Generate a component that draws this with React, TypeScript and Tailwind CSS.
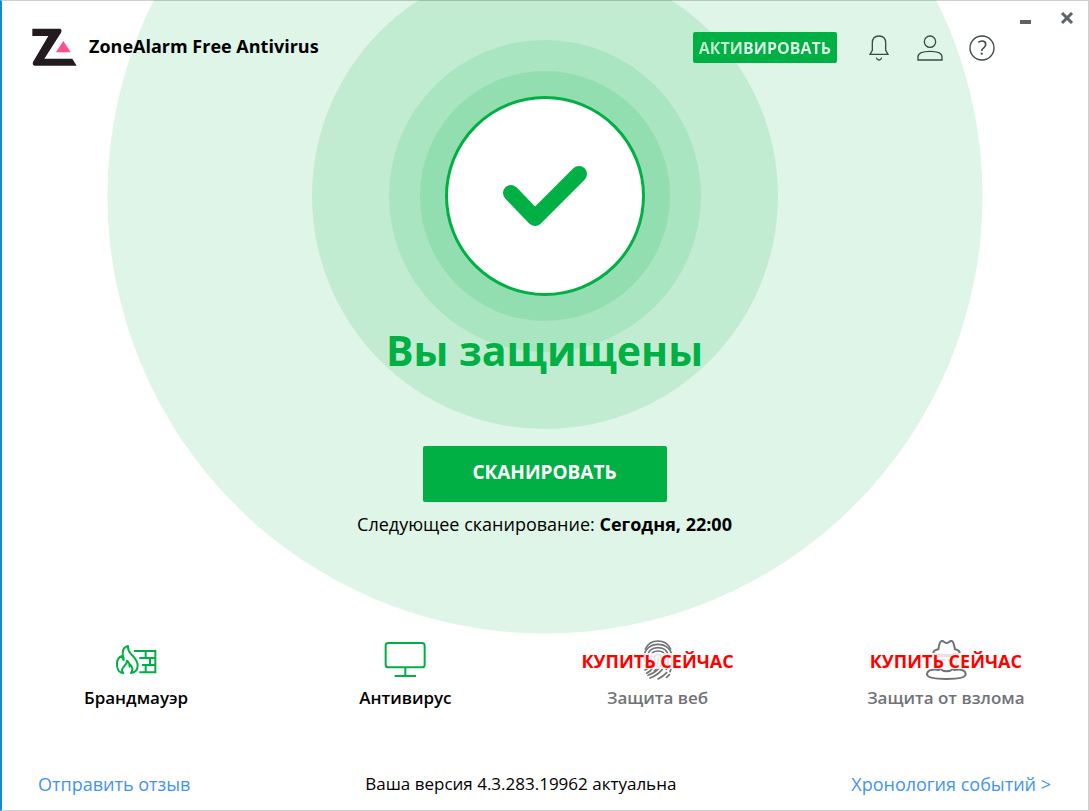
import type { ReactNode } from "react";

function Logo() {
  return (
    <svg viewBox="0 0 135 114" className="h-[38px] w-[45px]" aria-hidden="true">
      <path
        d="M1 2H84Q91 4 87 14L37 92H121L134 113H8Q0 111 3 102L49 24H1Z"
        fill="#231a20"
      />
      <path d="M94 39L116 73H72Z" fill="#ff4d8d" />
    </svg>
  );
}

function BellIcon() {
  return (
    <svg
      viewBox="0 0 60 78"
      className="h-[26px] w-5"
      fill="none"
      stroke="#3c4a48"
      strokeWidth="4"
      aria-hidden="true"
    >
      <path d="M10 46V24C10 10 18 3 30 3S50 10 50 24V46L57 58H3L10 46Z" />
      <path d="M22 68Q24 75 30 75T38 68" />
    </svg>
  );
}

function UserIcon() {
  return (
    <svg
      viewBox="0 0 78 78"
      className="size-[26px]"
      fill="none"
      stroke="#3c4a48"
      strokeWidth="4"
      aria-hidden="true"
    >
      <circle cx="39" cy="20" r="17" />
      <path d="M3 75V66C3 54 20 49 39 49S75 54 75 66V75Z" />
    </svg>
  );
}

function HelpIcon() {
  return (
    <svg
      viewBox="0 0 78 78"
      className="size-[26px]"
      fill="none"
      stroke="#3c4a48"
      strokeWidth="4"
      aria-hidden="true"
    >
      <circle cx="39" cy="39" r="36" />
      <path d="M28 22Q33 18 39 18Q50 18 50 28Q50 34 45 38Q38 43 38 48" strokeWidth="5" />
      <path d="M38 53V59" strokeWidth="6" />
    </svg>
  );
}

function FirewallIcon() {
  return (
    <svg
      viewBox="0 0 132 120"
      className="h-10 w-11"
      fill="none"
      stroke="#00b044"
      strokeWidth="6"
      aria-hidden="true"
    >
      <path
        d="M28 99C14 98 8 85 9 71C9 60 13 52 24 48C25 55 26 58 29 60C30 53 23 44 27 32C29 24 34 20 42 18C41 28 44 34 50 41C60 51 71 61 71 76C71 91 64 98 51 99C57 91 56 82 49 74L47 80C47 72 45 67 39 62C39 75 25 80 24 90Q24 95 28 99Z"
        strokeLinejoin="round"
      />
      <path d="M60 33H124V97H76M76 54H124M84 75H124M95 33V54M108 54V75M95 75V97" />
    </svg>
  );
}

function MonitorIcon() {
  return (
    <svg
      viewBox="0 0 132 120"
      className="h-10 w-11"
      fill="none"
      stroke="#00b044"
      strokeWidth="6"
      aria-hidden="true"
    >
      <rect x="8" y="9" width="117" height="73" rx="8" />
      <path d="M67 82V108M35 108H99" />
    </svg>
  );
}

function FingerprintIcon() {
  return (
    <svg
      viewBox="0 0 132 120"
      className="h-10 w-11"
      fill="none"
      stroke="#6f7376"
      strokeWidth="5"
      strokeLinecap="round"
      aria-hidden="true"
    >
      <path d="M28 27C36 10 49 3 66 3S96 10 104 27" />
      <path d="M25 64V48C25 27 44 13 66 13S107 27 107 48V76" />
      <path d="M26 78C34 73 36 67 36 58V49C36 33 48 23 66 23S96 33 96 49V68C96 76 94 83 91 88" />
      <path d="M27 90C42 83 46 72 46 60V49C46 38 54 33 66 33S86 38 86 49V64C86 87 68 104 42 114" />
      <path d="M32 100C50 90 56 76 56 62V50Q57 43 66 43T76 50V64C76 82 61 97 36 106" />
      <path d="M66 54V64C66 77 62 86 55 94M105 86L102 95M92 98C84 107 76 112 66 117M100 104L92 112" />
    </svg>
  );
}

function SpyIcon() {
  return (
    <svg
      viewBox="0 0 132 120"
      className="h-10 w-11"
      fill="none"
      stroke="#6f7376"
      strokeWidth="6"
      strokeLinecap="round"
      strokeLinejoin="round"
      aria-hidden="true"
    >
      <path d="M43 28C45 15 47 4 53 3C59 2 62 9 68 9S77 2 83 3C89 4 90 16 93 28C104 31 107 34 107 38C105 47 30 47 28 38C28 34 31 31 43 28Z" />
      <path d="M38 49H98V64C98 84 82 94 68 94S38 84 38 64ZM45 60H62M74 60H91" />
      <path d="M45 90C25 86 9 91 9 103C9 113 36 117 67 117S125 113 125 103C125 91 110 86 90 90" />
    </svg>
  );
}

interface FeatureProps {
  label: string;
  icon: ReactNode;
  /** Not part of the free edition: the icon is covered by an offer to buy. */
  locked?: boolean;
  className?: string;
}

function Feature({ label, icon, locked = false, className = "" }: FeatureProps) {
  return (
    <li className={`flex justify-center ${className}`}>
      <button type="button" className="flex cursor-pointer flex-col items-center">
        <span className="relative flex justify-center">
          {icon}
          {locked && (
            <span className="absolute top-1/2 left-1/2 mt-px -translate-x-1/2 -translate-y-1/2 bg-white/80 text-lg leading-4 font-bold whitespace-nowrap text-[#ff0000]">
              КУПИТЬ СЕЙЧАС
            </span>
          )}
        </span>
        <span
          className={`mt-1.5 text-[17px] leading-6 font-semibold ${
            locked ? "text-[#6f7376]" : "text-black"
          }`}
        >
          {label}
        </span>
      </button>
    </li>
  );
}

function Ring({ className }: { className: string }) {
  return (
    <span
      className={`absolute top-1/2 left-1/2 -translate-x-1/2 -translate-y-1/2 rounded-full ${className}`}
    />
  );
}

function StatusBadge() {
  return (
    <div className="relative size-[200px]" aria-hidden="true">
      <Ring className="size-[875px] bg-[#dff5e8]" />
      <Ring className="size-[466px] bg-[#c2ecd2]" />
      <Ring className="size-[312px] bg-[#a8e5c0]" />
      <Ring className="size-[250px] bg-[#92deb1]" />
      <div className="relative flex size-full items-center justify-center rounded-full border-3 border-[#00b044] bg-white">
        <svg
          viewBox="0 0 84 60"
          className="h-[60px] w-[84px]"
          fill="none"
          stroke="#00b044"
          strokeWidth="16"
          strokeLinecap="round"
          strokeLinejoin="round"
        >
          <path d="M8 27L32 52L76 8" />
        </svg>
      </div>
    </div>
  );
}

export default function App() {
  return (
    <div className="relative flex min-h-screen flex-col overflow-hidden bg-white font-['Open_Sans','Noto_Sans',sans-serif] text-black">
      <header className="relative z-10 flex h-24 items-start pt-7 pr-[15px] pl-8">
        <Logo />
        <h1 className="ml-3 text-lg leading-9 font-bold">ZoneAlarm Free Antivirus</h1>
        <div className="mt-1 ml-auto flex items-center">
          <button
            type="button"
            className="flex h-[31px] cursor-pointer items-center rounded-xs bg-[#00b044] px-1.5 text-base font-bold"
          >
            <span className="bg-linear-to-r from-[#c2ecd2] from-30% to-[#dff5e8] to-30% bg-clip-text text-transparent">
              АКТИВИРОВАТЬ
            </span>
          </button>
          <button type="button" aria-label="Уведомления" className="ml-8 cursor-pointer">
            <BellIcon />
          </button>
          <button type="button" aria-label="Учётная запись" className="ml-7 cursor-pointer">
            <UserIcon />
          </button>
          <button type="button" aria-label="Справка" className="ml-[26px] cursor-pointer">
            <HelpIcon />
          </button>
        </div>
        <div className="-mt-4 ml-6 flex gap-7">
          <button type="button" aria-label="Свернуть" className="cursor-pointer">
            <svg viewBox="0 0 13 14" className="h-3.5 w-[13px]">
              <path d="M1 10H12" stroke="#5c6265" strokeWidth="4" />
            </svg>
          </button>
          <button type="button" aria-label="Закрыть" className="cursor-pointer">
            <svg viewBox="0 0 14 14" className="size-3.5">
              <path d="M2 1L12 11M12 1L2 11" stroke="#5c6265" strokeWidth="3" />
            </svg>
          </button>
        </div>
      </header>

      <main className="flex flex-col items-center">
        <StatusBadge />
        <h2 className="relative mt-[22px] text-[41px] leading-16 font-bold text-[#00b044]">
          Вы защищены
        </h2>
        <button
          type="button"
          className="relative mt-16 flex h-14 w-[244px] cursor-pointer justify-center rounded-xs bg-[#00b044] pt-3.5 text-[19px] leading-6 font-bold text-white"
        >
          СКАНИРОВАТЬ
        </button>
        <p className="relative mt-2.5 text-lg leading-6">
          Следующее сканирование: <b>Сегодня, 22:00</b>
        </p>
      </main>

      <ul className="relative mt-26 grid grid-cols-[270fr_270fr_234fr_314fr]">
        <Feature label="Брандмауэр" icon={<FirewallIcon />} className="pl-0.5" />
        <Feature label="Антивирус" icon={<MonitorIcon />} />
        <Feature label="Защита веб" icon={<FingerprintIcon />} locked />
        <Feature label="Защита от взлома" icon={<SpyIcon />} locked className="pl-7" />
      </ul>

      <footer className="relative mt-auto flex items-center justify-between px-[38px] pb-[15px] text-lg leading-6">
        <a href="#feedback" className="text-[#3f93f5]">
          Отправить отзыв
        </a>
        <span className="text-[17px]">Ваша версия 4.3.283.19962 актуальна</span>
        <a href="#timeline" className="text-[#3f93f5]">
          Хронология событий &gt;
        </a>
      </footer>

      {/* window frame, drawn over the rings */}
      <div className="pointer-events-none absolute inset-0 z-20 border border-l-2 border-black/18 border-l-[#0a90d0]" />
    </div>
  );
}
